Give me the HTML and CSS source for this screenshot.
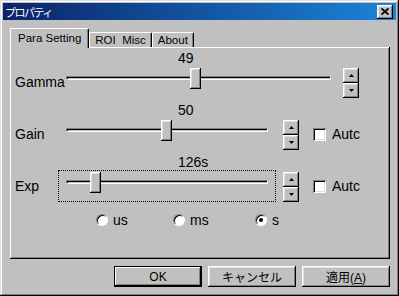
FILE: index.html
```html
<!DOCTYPE html>
<html lang="ja">

<head>
    <meta charset="UTF-8">
    <title>プロパティ</title>
    <link rel="stylesheet" href="styles.css">
</head>

<body>
    <div class="window">
        <div class="titlebar">
            <span class="title">プロパティ</span>
            <button class="close" type="button">
                <svg width="8" height="7" viewBox="0 0 8 7"><path d="M0.5 0.5L7.5 6.5M7.5 0.5L0.5 6.5" stroke="#000" stroke-width="1.8" fill="none"/></svg>
            </button>
        </div>

        <div class="tabs">
            <div class="tab active">Para Setting</div>
            <div class="tab">ROI&nbsp; Misc</div>
            <div class="tab">About</div>
        </div>

        <div class="panel">
            <!-- Gamma -->
            <div class="block">
                <div class="value">49</div>
                <div class="row">
                    <span class="label">Gamma</span>
                    <div class="slider wide">
                        <div class="track"></div>
                        <div class="thumb" style="left: 132px"></div>
                    </div>
                    <div class="spin tight">
                        <div class="spin-btn"><svg width="5" height="3"><polygon points="2.5,0 5,3 0,3" fill="#000"/></svg></div>
                        <div class="spin-btn"><svg width="5" height="3"><polygon points="0,0 5,0 2.5,3" fill="#000"/></svg></div>
                    </div>
                </div>
            </div>

            <!-- Gain -->
            <div class="block">
                <div class="value">50</div>
                <div class="row">
                    <span class="label">Gain</span>
                    <div class="slider">
                        <div class="track"></div>
                        <div class="thumb" style="left: 103px"></div>
                    </div>
                    <div class="spin">
                        <div class="spin-btn"><svg width="5" height="3"><polygon points="2.5,0 5,3 0,3" fill="#000"/></svg></div>
                        <div class="spin-btn"><svg width="5" height="3"><polygon points="0,0 5,0 2.5,3" fill="#000"/></svg></div>
                    </div>
                    <span class="check"></span>
                    <span class="check-label">Autc</span>
                </div>
            </div>

            <!-- Exp -->
            <div class="block">
                <div class="value">126s</div>
                <div class="row">
                    <span class="label">Exp</span>
                    <div class="slider focus">
                        <div class="track"></div>
                        <div class="thumb" style="left: 32px"></div>
                    </div>
                    <div class="spin">
                        <div class="spin-btn"><svg width="5" height="3"><polygon points="2.5,0 5,3 0,3" fill="#000"/></svg></div>
                        <div class="spin-btn"><svg width="5" height="3"><polygon points="0,0 5,0 2.5,3" fill="#000"/></svg></div>
                    </div>
                    <span class="check"></span>
                    <span class="check-label">Autc</span>
                </div>
            </div>

            <div class="radios">
                <label class="option"><span class="radio"></span>us</label>
                <label class="option"><span class="radio"></span>ms</label>
                <label class="option"><span class="radio on"></span>s</label>
            </div>
        </div>

        <div class="actions">
            <button class="btn default" type="button">OK</button>
            <button class="btn" type="button">キャンセル</button>
            <button class="btn" type="button">適用(<u>A</u>)</button>
        </div>
    </div>
</body>

</html>
```

FILE: styles.css
```css
body {
    margin: 0;
    background-color: #c0c0c0;
    font-family: "Liberation Sans", Arial, "Noto Sans CJK JP", sans-serif;
    color: #000;
}

.window {
    width: 399px;
    height: 296px;
    box-sizing: border-box;
    padding: 3px;
    background-color: #c0c0c0;
    box-shadow: inset -1px -1px #000, inset 1px 1px #dfdfdf, inset -2px -2px #808080, inset 2px 2px #fff;
}

.titlebar {
    height: 17px;
    display: flex;
    align-items: center;
    justify-content: space-between;
    padding: 0 3px 0 2px;
    background: linear-gradient(90deg, #0a246a, #1c84d8);
    color: #fff;
}

.title {
    font-family: "Noto Sans CJK JP", sans-serif;
    font-size: 11px;
    letter-spacing: -1.5px;
}

.close {
    width: 16px;
    height: 14px;
    padding: 0;
    border: none;
    background-color: #c0c0c0;
    display: flex;
    align-items: center;
    justify-content: center;
    box-shadow: inset -1px -1px #000, inset 1px 1px #fff, inset -2px -2px #808080, inset 2px 2px #dfdfdf;
}

/* Tabs */
.tabs {
    display: flex;
    align-items: flex-end;
    height: 19px;
    margin: 8px 0 0 7px;
    font-size: 11.5px;
}

.tab {
    height: 15px;
    box-sizing: border-box;
    padding: 1px 5px 0;
    line-height: 13px;
    white-space: nowrap;
    border-top: 1px solid #fff;
    border-left: 1px solid #fff;
    border-right: 1px solid #000;
    border-radius: 2px 2px 0 0;
    box-shadow: inset -1px 0 #808080;
}

.tab.active {
    position: relative;
    z-index: 1;
    height: 20px;
    margin-bottom: -1px;
    padding: 3px 7px 0;
    background-color: #c0c0c0;
}

.panel {
    margin-left: 7px;
    width: 380px;
    height: 212px;
    box-sizing: border-box;
    padding: 1px 0 0 5px;
    box-shadow: inset -1px -1px #000, inset 1px 1px #fff, inset -2px -2px #808080;
}

/* Slider rows */
.block {
    height: 50px;
}

.value {
    height: 16px;
    margin-top: 2px;
    line-height: 16px;
    font-size: 14px;
    padding-left: 163px;
}

.row {
    display: flex;
    align-items: center;
    height: 32px;
    font-size: 14px;
}

.label {
    flex: none;
    width: 43px;
    line-height: 16px;
    white-space: nowrap;
}

.slider {
    position: relative;
    flex: none;
    width: 218px;
    height: 32px;
    box-sizing: border-box;
    padding: 10px 8px 0;
}

.slider.wide {
    width: 281px;
}

.slider.focus {
    outline: 1px dotted #000;
    outline-offset: -1px;
}

.track {
    height: 4px;
    box-sizing: border-box;
    border-top: 1px solid #808080;
    border-left: 1px solid #808080;
    border-right: 1px solid #fff;
    border-bottom: 1px solid #fff;
    box-shadow: inset 1px 1px #000;
}

.thumb {
    position: absolute;
    top: 2px;
    width: 11px;
    height: 21px;
    background-color: #c0c0c0;
    box-shadow: inset -1px -1px #000, inset 1px 1px #fff, inset -2px -2px #808080, inset 2px 2px #dfdfdf;
}

.spin {
    flex: none;
    align-self: flex-start;
    display: flex;
    flex-direction: column;
    width: 16px;
    margin: 2px 0 0 7px;
}

.spin.tight {
    margin-left: 4px;
}

.spin-btn {
    height: 15px;
    display: flex;
    align-items: center;
    justify-content: center;
    box-shadow: inset -1px -1px #000, inset 1px 1px #fff, inset -2px -2px #808080, inset 2px 2px #dfdfdf;
}

.check {
    flex: none;
    width: 13px;
    height: 13px;
    margin-left: 14px;
    background-color: #fff;
    box-shadow: inset 1px 1px #808080, inset -1px -1px #fff, inset 2px 2px #000, inset -2px -2px #dfdfdf;
}

.check-label {
    margin-left: 6px;
}

/* Unit radios */
.radios {
    display: grid;
    grid-template-columns: 77px 82px auto;
    align-items: center;
    height: 16px;
    margin: 8px 0 0 81px;
    font-size: 14px;
}

.option {
    display: flex;
    align-items: center;
    gap: 5px;
}

.radio {
    position: relative;
    width: 12px;
    height: 12px;
    box-sizing: border-box;
    border-radius: 50%;
    background-color: #fff;
    border: 1px solid;
    border-color: #808080 #fff #fff #808080;
    box-shadow: inset 1px 1px #000;
}

.radio.on::after {
    content: "";
    position: absolute;
    left: 3px;
    top: 3px;
    width: 4px;
    height: 4px;
    border-radius: 50%;
    background-color: #000;
}

/* Dialog buttons */
.actions {
    display: flex;
    justify-content: flex-end;
    gap: 6px;
    margin: 7px 6px 0 0;
}

.btn {
    width: 88px;
    height: 21px;
    padding: 0;
    border: none;
    background-color: #c0c0c0;
    font-family: "Liberation Sans", Arial, "Noto Sans CJK JP", sans-serif;
    font-size: 12px;
    color: #000;
    box-shadow: inset -1px -1px #000, inset 1px 1px #fff, inset -2px -2px #808080, inset 2px 2px #dfdfdf;
}

.btn.default {
    box-shadow: inset 0 0 0 1px #000, inset -2px -2px #000, inset 2px 2px #fff, inset -3px -3px #808080;
}
```
